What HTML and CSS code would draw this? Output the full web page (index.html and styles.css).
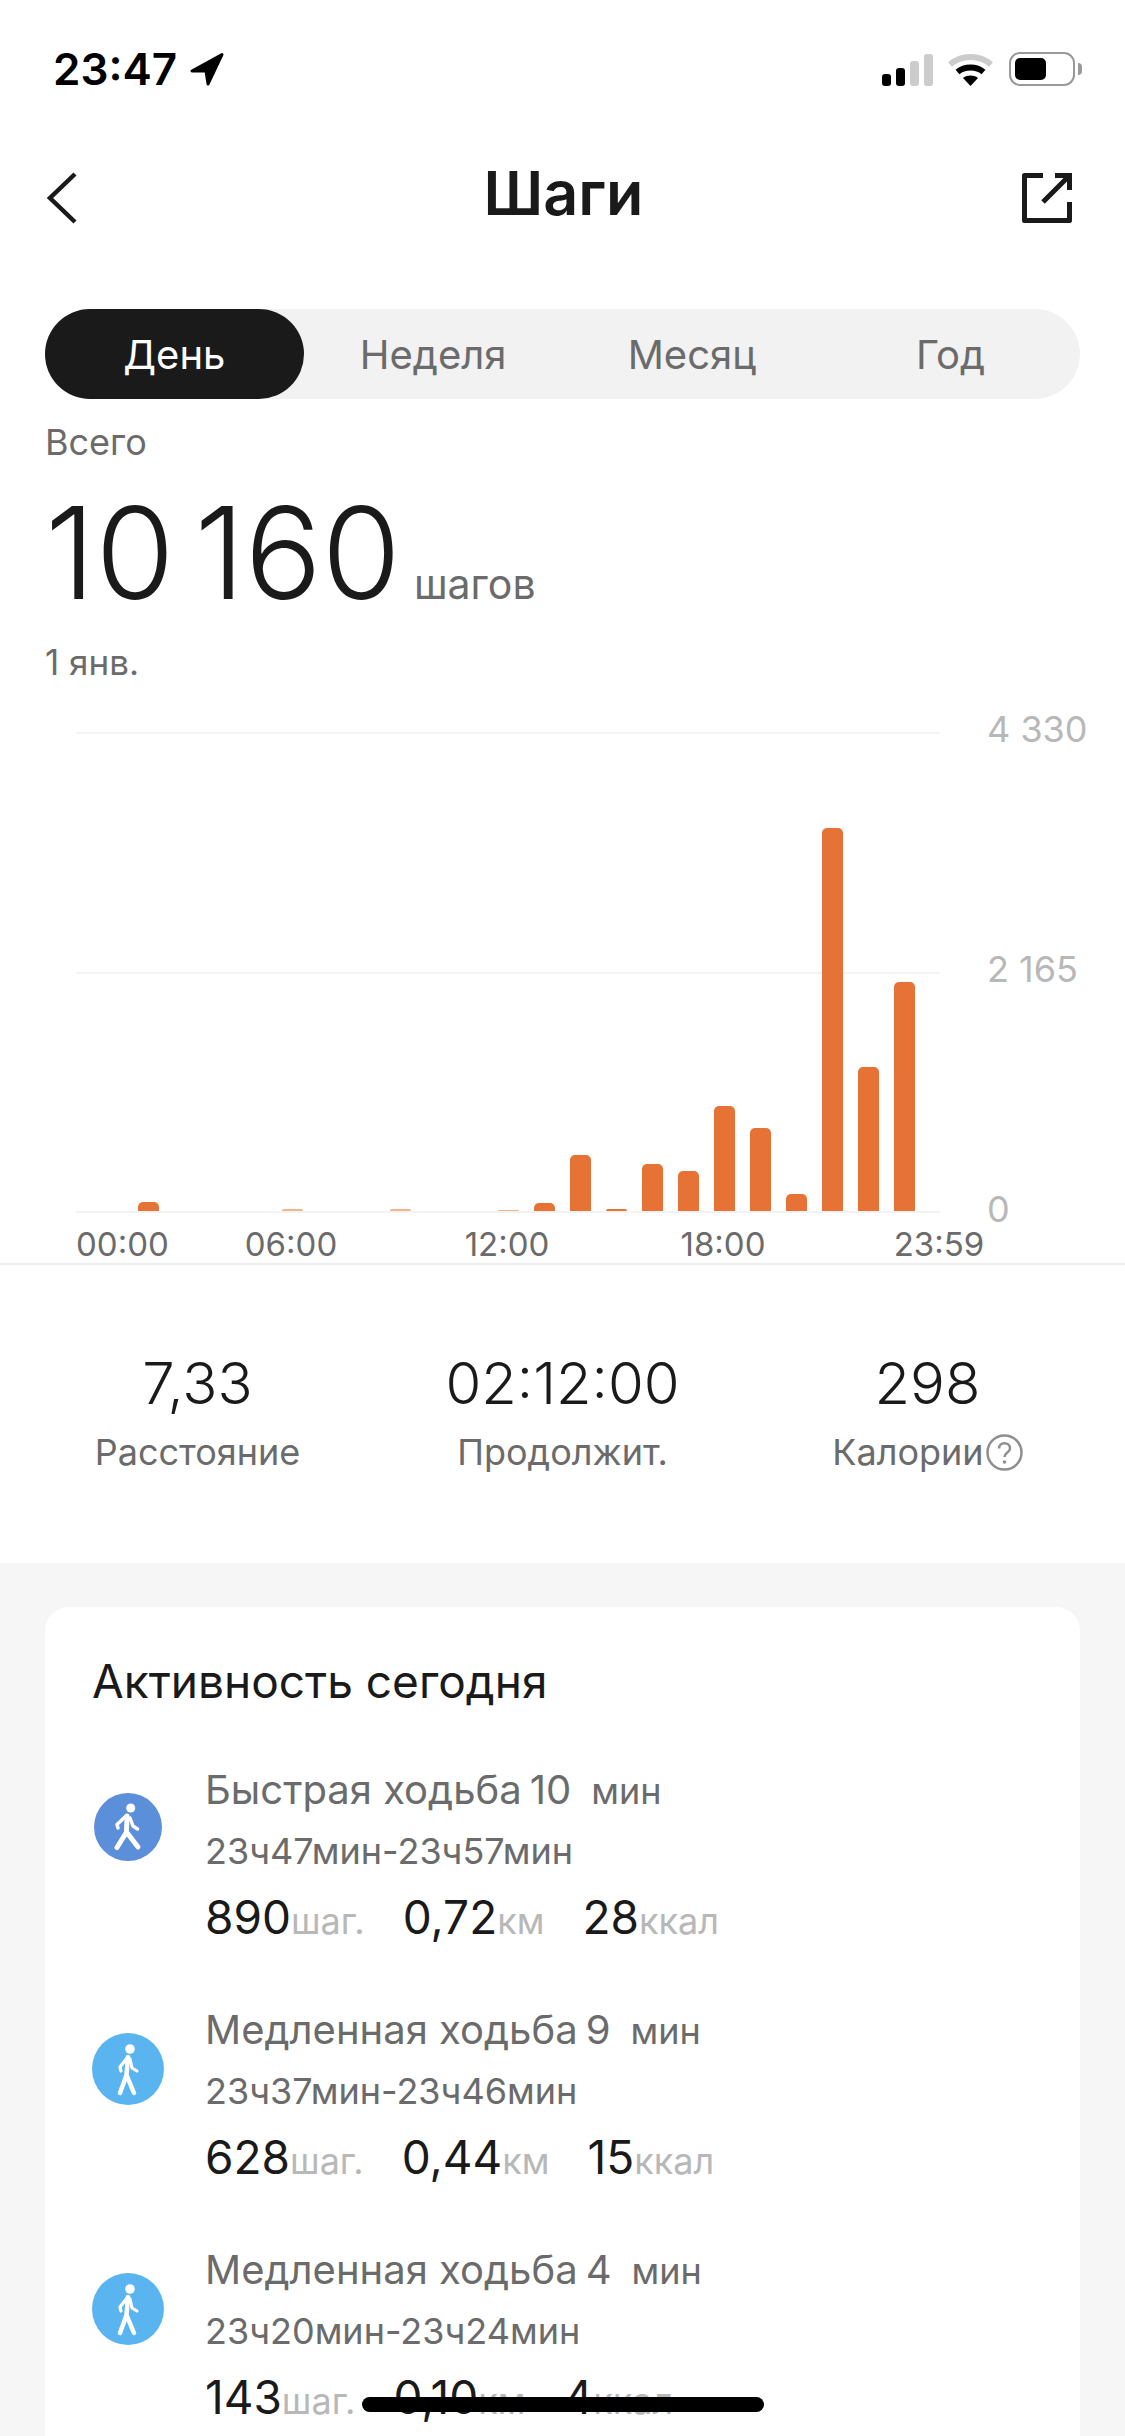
FILE: index.html

```html
<!DOCTYPE html>
<html lang="ru">
<head>
    <meta charset="UTF-8">
    <meta name="viewport" content="width=device-width, initial-scale=1.0">
    <title>Шаги</title>
    <link rel="stylesheet" href="styles.css">
</head>
<body>
    <div class="screen">
        <div class="status-bar">
            <div class="status-left">
                <span class="clock">23:47</span>
                <svg class="location" width="36" height="34" viewBox="0 0 36 34">
                    <path d="M33 2.5 L3 19 H17 L19 32 Z" fill="#000" stroke="#000" stroke-width="3" stroke-linejoin="round"/>
                </svg>
            </div>
            <div class="status-right">
                <div class="signal">
                    <i class="sig sig-1"></i>
                    <i class="sig sig-2"></i>
                    <i class="sig sig-3"></i>
                    <i class="sig sig-4"></i>
                </div>
                <svg class="wifi" width="45" height="33" viewBox="0 0 45 33">
                    <path d="M2 11.5 C13.5 1.5 31.5 1.5 43 11.5" fill="none" stroke="#ccc" stroke-width="6"/>
                    <path d="M9.5 19 C16.5 13 28.5 13 35.5 19" fill="none" stroke="#000" stroke-width="6"/>
                    <path d="M15 25 C19.5 21.8 25.5 21.8 30 25 L22.5 33 Z" fill="#000"/>
                </svg>
                <div class="battery">
                    <div class="battery-body"><div class="battery-fill"></div></div>
                    <div class="battery-nub"></div>
                </div>
            </div>
        </div>

        <div class="nav-bar">
            <svg width="60" height="60" viewBox="0 0 60 60">
                <path d="M30 6 L5 30 L30 54" fill="none" stroke="#1a1a1a" stroke-width="4.5"/>
            </svg>
            <h1 class="nav-title">Шаги</h1>
            <svg width="50" height="50" viewBox="0 0 50 50">
                <path d="M21 2.5 H2.5 V47.5 H47.5 V29" fill="none" stroke="#1a1a1a" stroke-width="5" stroke-linejoin="round"/>
                <path d="M21 29 L46 4 M33 2.5 H47.5 V17" fill="none" stroke="#1a1a1a" stroke-width="5"/>
            </svg>
        </div>

        <div class="tabs">
            <div class="tab active">День</div>
            <div class="tab">Неделя</div>
            <div class="tab">Месяц</div>
            <div class="tab">Год</div>
        </div>

        <div class="summary">
            <div class="summary-label">Всего</div>
            <div class="summary-total"><span class="total-num">10 160</span><span class="total-unit">шагов</span></div>
            <div class="summary-date">1 янв.</div>
        </div>

        <div class="chart">
            <div class="plot">
                <div class="grid-row"></div>
                <div class="grid-row"></div>
                <div class="bars">
                    <div class="slot"></div>
                    <div class="slot"></div>
                    <div class="slot"><div class="bar" style="height:9px"></div></div>
                    <div class="slot"></div>
                    <div class="slot"></div>
                    <div class="slot"></div>
                    <div class="slot"><div class="bar faint" style="height:2px"></div></div>
                    <div class="slot"></div>
                    <div class="slot"></div>
                    <div class="slot"><div class="bar faint" style="height:2px"></div></div>
                    <div class="slot"></div>
                    <div class="slot"></div>
                    <div class="slot"><div class="bar faint" style="height:1px"></div></div>
                    <div class="slot"><div class="bar" style="height:8px"></div></div>
                    <div class="slot"><div class="bar" style="height:56px"></div></div>
                    <div class="slot"><div class="bar" style="height:2px"></div></div>
                    <div class="slot"><div class="bar" style="height:47px"></div></div>
                    <div class="slot"><div class="bar" style="height:40px"></div></div>
                    <div class="slot"><div class="bar" style="height:105px"></div></div>
                    <div class="slot"><div class="bar" style="height:83px"></div></div>
                    <div class="slot"><div class="bar" style="height:17px"></div></div>
                    <div class="slot"><div class="bar" style="height:383px"></div></div>
                    <div class="slot"><div class="bar" style="height:144px"></div></div>
                    <div class="slot"><div class="bar" style="height:229px"></div></div>
                </div>
            </div>
            <div class="y-axis">
                <span>4 330</span>
                <span>2 165</span>
                <span>0</span>
            </div>
        </div>

        <div class="x-axis">
            <span>00:00</span>
            <span>06:00</span>
            <span>12:00</span>
            <span>18:00</span>
            <span>23:59</span>
        </div>

        <div class="stats">
            <div class="stat">
                <div class="stat-value">7,33</div>
                <div class="stat-label">Расстояние</div>
            </div>
            <div class="stat">
                <div class="stat-value">02:12:00</div>
                <div class="stat-label">Продолжит.</div>
            </div>
            <div class="stat">
                <div class="stat-value">298</div>
                <div class="stat-label">Калории<svg class="help" width="37" height="37" viewBox="0 0 37 37">
                    <circle cx="18.5" cy="18.5" r="17" fill="none" stroke="#8f8f8f" stroke-width="2.5"/>
                    <path d="M13 14.5 C13 7.5 24 7.5 24 14.5 C24 18.5 18.5 18.5 18.5 23" fill="none" stroke="#8f8f8f" stroke-width="2.5"/>
                    <circle cx="18.5" cy="28" r="1.8" fill="#8f8f8f"/>
                </svg></div>
            </div>
        </div>

        <div class="lower">
            <div class="card">
                <h2 class="card-title">Активность сегодня</h2>

                <div class="activity">
                    <div class="activity-icon">
                        <svg width="68" height="68" viewBox="0 0 68 68">
                            <circle cx="34" cy="34" r="34" fill="#5b8fd9"/>
                            <circle cx="36.7" cy="15" r="4.5" fill="#fff"/>
                            <path d="M33 23 L32.5 39 L44 54 M32 40 L23 54.5" fill="none" stroke="#fff" stroke-width="5" stroke-linecap="round" stroke-linejoin="round"/>
                            <path d="M32 23 L23 31.5 L24 35 M36 25 L39 33 L43.5 36" fill="none" stroke="#fff" stroke-width="3.5" stroke-linecap="round" stroke-linejoin="round"/>
                        </svg>
                    </div>
                    <div class="activity-body">
                        <div class="activity-title">Быстрая ходьба<span class="duration">10</span><span class="duration-unit">мин</span></div>
                        <div class="activity-time">23ч47мин-23ч57мин</div>
                        <div class="activity-values">
                            <span class="metric"><b>890</b><em>шаг.</em></span>
                            <span class="metric"><b>0,72</b><em>км</em></span>
                            <span class="metric"><b>28</b><em>ккал</em></span>
                        </div>
                    </div>
                </div>

                <div class="activity">
                    <div class="activity-icon">
                        <svg width="72" height="72" viewBox="0 0 72 72">
                            <circle cx="36" cy="36" r="36" fill="#5ab4ef"/>
                            <circle cx="38" cy="16" r="4.8" fill="#fff"/>
                            <path d="M36 24 L34.5 42 L42 60 M34.5 42 L28 60" fill="none" stroke="#fff" stroke-width="4.5" stroke-linecap="round" stroke-linejoin="round"/>
                            <path d="M35 25 L28 34 L29 38 M38 26 L40 35 L45 38" fill="none" stroke="#fff" stroke-width="3.2" stroke-linecap="round" stroke-linejoin="round"/>
                        </svg>
                    </div>
                    <div class="activity-body">
                        <div class="activity-title">Медленная ходьба<span class="duration">9</span><span class="duration-unit">мин</span></div>
                        <div class="activity-time">23ч37мин-23ч46мин</div>
                        <div class="activity-values">
                            <span class="metric"><b>628</b><em>шаг.</em></span>
                            <span class="metric"><b>0,44</b><em>км</em></span>
                            <span class="metric"><b>15</b><em>ккал</em></span>
                        </div>
                    </div>
                </div>

                <div class="activity">
                    <div class="activity-icon">
                        <svg width="72" height="72" viewBox="0 0 72 72">
                            <circle cx="36" cy="36" r="36" fill="#5ab4ef"/>
                            <circle cx="38" cy="16" r="4.8" fill="#fff"/>
                            <path d="M36 24 L34.5 42 L42 60 M34.5 42 L28 60" fill="none" stroke="#fff" stroke-width="4.5" stroke-linecap="round" stroke-linejoin="round"/>
                            <path d="M35 25 L28 34 L29 38 M38 26 L40 35 L45 38" fill="none" stroke="#fff" stroke-width="3.2" stroke-linecap="round" stroke-linejoin="round"/>
                        </svg>
                    </div>
                    <div class="activity-body">
                        <div class="activity-title">Медленная ходьба<span class="duration">4</span><span class="duration-unit">мин</span></div>
                        <div class="activity-time">23ч20мин-23ч24мин</div>
                        <div class="activity-values">
                            <span class="metric"><b>143</b><em>шаг.</em></span>
                            <span class="metric"><b>0,10</b><em>км</em></span>
                            <span class="metric"><b>4</b><em>ккал</em></span>
                        </div>
                    </div>
                </div>
            </div>
        </div>

        <div class="home-indicator"></div>
    </div>
</body>
</html>
```

FILE: styles.css

```css
* {
    box-sizing: border-box;
}

body {
    margin: 0;
    font-family: Inter, "Noto Sans", sans-serif;
    color: #1a1a1a;
    background-color: #fff;
}

.screen {
    position: relative;
    width: 1125px;
    height: 2436px;
    overflow: hidden;
}

/* status bar */
.status-bar {
    display: flex;
    justify-content: space-between;
    align-items: center;
    height: 138px;
    padding: 0 43px 0 53px;
}

.status-left {
    display: flex;
    align-items: center;
    gap: 12px;
}

.clock {
    font-size: 44px;
    font-weight: 600;
    color: #000;
}

.status-right {
    display: flex;
    align-items: flex-end;
}

.signal {
    display: flex;
    align-items: flex-end;
    gap: 5px;
    margin-right: 15px;
}

.sig {
    display: block;
    width: 9px;
    border-radius: 3px;
    background-color: #ccc;
}

.sig-1 {
    height: 12px;
    background-color: #000;
}

.sig-2 {
    height: 18px;
    background-color: #000;
}

.sig-3 {
    height: 25px;
}

.sig-4 {
    height: 32px;
}

.wifi {
    margin-right: 16px;
}

.battery {
    display: flex;
    align-items: center;
    gap: 3px;
}

.battery-body {
    width: 66px;
    height: 34px;
    padding: 4px;
    border: 2.5px solid #999;
    border-radius: 11px;
}

.battery-fill {
    width: 31px;
    height: 100%;
    border-radius: 5px;
    background-color: #000;
}

.battery-nub {
    width: 4px;
    height: 12px;
    border-radius: 0 4px 4px 0;
    background-color: #999;
}

/* nav */
.nav-bar {
    display: flex;
    justify-content: space-between;
    align-items: center;
    height: 120px;
    padding: 0 53px 0 45px;
}

.nav-title {
    margin: 0 0 10px;
    font-size: 61px;
    font-weight: 600;
}

/* period switch */
.tabs {
    display: flex;
    height: 90px;
    margin: 51px 45px 0;
    border-radius: 45px;
    background-color: #f2f2f2;
}

.tab {
    display: flex;
    flex: 1;
    justify-content: center;
    align-items: center;
    border-radius: 45px;
    font-size: 40px;
    color: #6b6b6b;
}

.tab.active {
    color: #fff;
    background-color: #1a1a1a;
}

/* total */
.summary {
    padding: 19px 45px 0;
}

.summary-label {
    font-size: 36px;
    line-height: 48px;
    color: #6b6b6b;
}

.summary-date {
    font-size: 35px;
    line-height: 48px;
    color: #6b6b6b;
}

.summary-total {
    display: flex;
    align-items: baseline;
    gap: 13px;
    height: 172px;
    padding-top: 15px;
}

.total-num {
    font-size: 128px;
    font-weight: 300;
    line-height: 143px;
    word-spacing: -16px;
}

.total-unit {
    font-size: 41px;
    color: #6b6b6b;
}

/* chart */
.chart {
    display: flex;
    gap: 47px;
    margin-top: 46px;
    padding-left: 76px;
}

.plot {
    position: relative;
    width: 864px;
    height: 481px;
    border-bottom: 2px solid #f3f3f3;
}

.grid-row {
    height: 240px;
    border-top: 2px solid #f3f3f3;
}

.bars {
    position: absolute;
    left: -18px;
    bottom: 0;
    display: flex;
    align-items: flex-end;
}

.slot {
    display: flex;
    justify-content: center;
    width: 36px;
}

.bar {
    width: 21px;
    border-radius: 5px 5px 0 0;
    background-color: #e67335;
}

.bar.faint {
    background-color: #f0b48e;
}

.y-axis {
    display: flex;
    flex-direction: column;
    justify-content: space-between;
    height: 530px;
    margin: -28px 0 -21px;
    font-size: 36px;
    line-height: 50px;
    color: #b8b8b8;
    white-space: nowrap;
}

.x-axis {
    display: grid;
    grid-template-columns: 107px 216px 216px 216px 216px;
    height: 52px;
    padding: 13px 0 0 76px;
    font-size: 33px;
    line-height: 37px;
    color: #6b6b6b;
    text-align: center;
    border-bottom: 2px solid #ececec;
}

.x-axis span:first-child {
    text-align: left;
}

/* day stats */
.stats {
    display: flex;
    height: 298px;
    padding: 82px 15px 0;
}

.stat {
    flex: 1;
    text-align: center;
}

.stat-value {
    font-size: 58px;
    font-weight: 350;
    line-height: 72px;
}

.stat-label {
    display: flex;
    justify-content: center;
    align-items: center;
    gap: 2px;
    margin-top: 9px;
    font-size: 36px;
    line-height: 48px;
    color: #6b6b6b;
}

/* activity list */
.lower {
    height: 873px;
    padding: 44px 45px 0;
    background-color: #f6f6f6;
}

.card {
    height: 900px;
    padding: 45px 47px 0;
    border-radius: 24px;
    background-color: #fff;
}

.card-title {
    margin: 0 0 51px;
    font-size: 46px;
    font-weight: 400;
    line-height: 58px;
}

.activity {
    display: flex;
    height: 240px;
}

.activity-icon {
    display: flex;
    justify-content: center;
    width: 72px;
    height: 72px;
    margin: 32px 41px 0 0;
}

.activity-title {
    font-size: 40px;
    line-height: 58px;
    color: #6b6b6b;
}

.duration {
    margin-left: 8px;
}

.duration-unit {
    margin-left: 20px;
    font-size: 36px;
}

.activity-time {
    margin-top: 4px;
    font-size: 36px;
    line-height: 54px;
    color: #6b6b6b;
}

.activity-values {
    display: flex;
    gap: 38px;
    margin-top: 8px;
    line-height: 62px;
}

.metric {
    white-space: nowrap;
}

.metric b {
    font-size: 46px;
    font-weight: 400;
}

.metric em {
    font-size: 36px;
    font-style: normal;
    color: #b8b8b8;
}

.home-indicator {
    position: absolute;
    left: 362px;
    bottom: 24px;
    width: 402px;
    height: 15px;
    border-radius: 8px;
    background-color: #000;
}
```
